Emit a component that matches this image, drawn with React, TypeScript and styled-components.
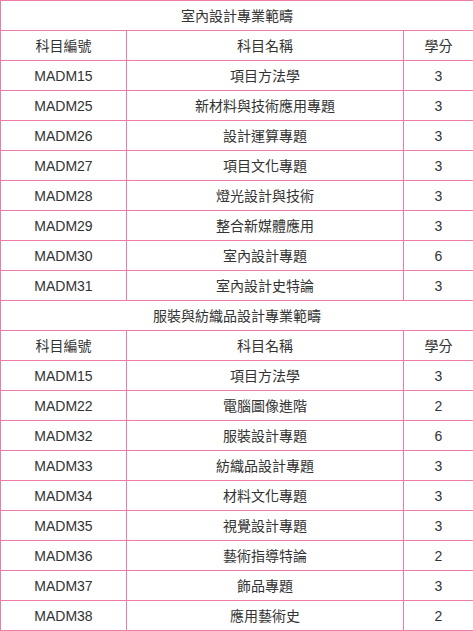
import React from "react";
import styled, { createGlobalStyle } from "styled-components";

const Global = createGlobalStyle`
  html, body { margin: 0; padding: 0; background: #ffffff; }
  body { font-family: "Liberation Sans", Arial, "Noto Sans CJK TC", sans-serif; }
`;

const Table = styled.table`
  width: 473px;
  border-collapse: collapse;
  table-layout: fixed;
  font-family: "Liberation Sans", Arial, "Noto Sans CJK TC", sans-serif;
  font-size: 14px;
  color: #333333;
`;

const Col = styled.col<{ $w: number }>`
  width: ${(p) => p.$w}px;
`;

const Cell = styled.td`
  border: 1px solid #ee7ca9;
  height: 29px;
  padding: 0 4px;
  text-align: center;
  vertical-align: middle;
  line-height: 18px;
  font-weight: normal;
`;

const TitleCell = styled(Cell)``;

type Course = [string, string, number];

const sections: { title: string; rows: Course[] }[] = [
  {
    title: "室內設計專業範疇",
    rows: [
      ["MADM15", "項目方法學", 3],
      ["MADM25", "新材料與技術應用專題", 3],
      ["MADM26", "設計運算專題", 3],
      ["MADM27", "項目文化專題", 3],
      ["MADM28", "燈光設計與技術", 3],
      ["MADM29", "整合新媒體應用", 3],
      ["MADM30", "室內設計專題", 6],
      ["MADM31", "室內設計史特論", 3],
    ],
  },
  {
    title: "服裝與紡織品設計專業範疇",
    rows: [
      ["MADM15", "項目方法學", 3],
      ["MADM22", "電腦圖像進階", 2],
      ["MADM32", "服裝設計專題", 6],
      ["MADM33", "紡織品設計專題", 3],
      ["MADM34", "材料文化專題", 3],
      ["MADM35", "視覺設計專題", 3],
      ["MADM36", "藝術指導特論", 2],
      ["MADM37", "飾品專題", 3],
      ["MADM38", "應用藝術史", 2],
    ],
  },
];

export default function App() {
  return (
    <>
      <Global />
      <Table>
        <colgroup>
          <Col $w={126} />
          <Col $w={277} />
          <Col $w={70} />
        </colgroup>
        <tbody>
          {sections.map((s) => (
            <React.Fragment key={s.title}>
              <tr>
                <TitleCell colSpan={3}>{s.title}</TitleCell>
              </tr>
              <tr>
                <Cell>科目編號</Cell>
                <Cell>科目名稱</Cell>
                <Cell>學分</Cell>
              </tr>
              {s.rows.map((r) => (
                <tr key={s.title + r[0]}>
                  <Cell>{r[0]}</Cell>
                  <Cell>{r[1]}</Cell>
                  <Cell>{r[2]}</Cell>
                </tr>
              ))}
            </React.Fragment>
          ))}
        </tbody>
      </Table>
    </>
  );
}
